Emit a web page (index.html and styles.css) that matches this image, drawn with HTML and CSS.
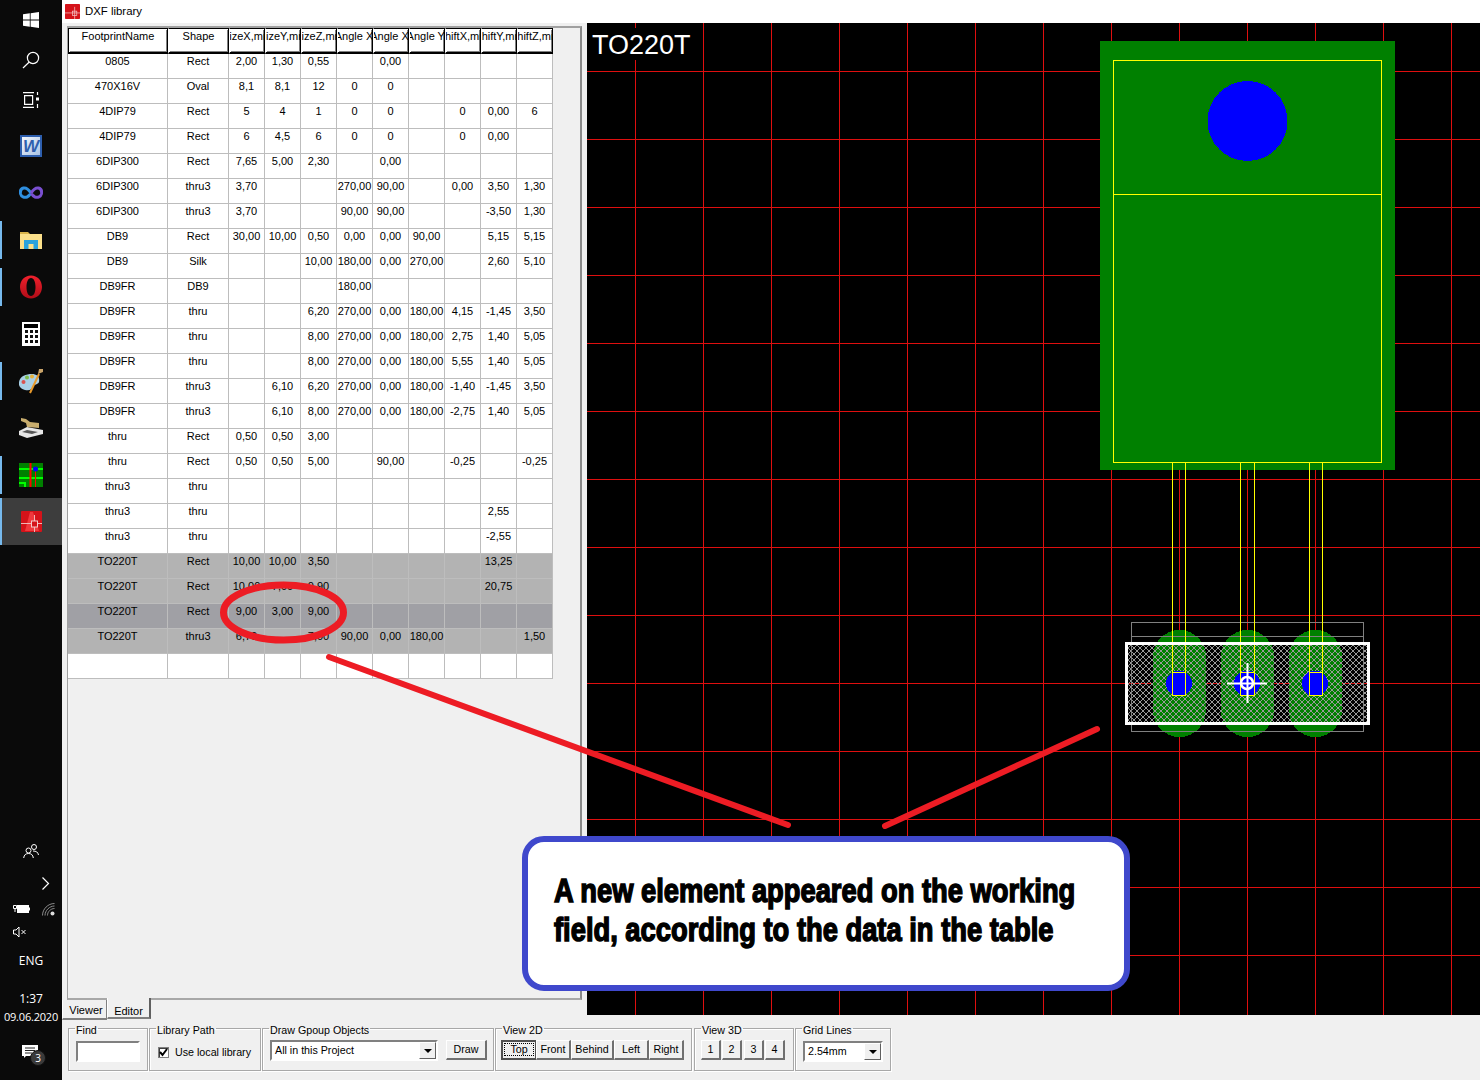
FILE: index.html
```html
<!DOCTYPE html>
<html lang="en">
<head>
<meta charset="utf-8">
<title>DXF library</title>
<link rel="stylesheet" href="styles.css">
</head>
<body>
<div class="desktop">
  <nav class="taskbar">
    <div class="launch">
      <span class="slot short"><svg width="16" height="16" viewBox="0 0 16 16"><path fill="#fff" d="M0 2.3l6.8-1v6.2H0zM7.6 1.2L16 0v7.5H7.6zM0 8.4h6.8v6.3L0 13.7zM7.6 8.4H16V16l-8.4-1.2z"/></svg></span>
      <span class="slot short"><svg width="18" height="18" viewBox="0 0 18 18" fill="none" stroke="#fff" stroke-width="1.2"><circle cx="11" cy="7" r="5.6"/><path d="M7 11.2L1 17"/></svg></span>
      <span class="slot short"><svg width="18" height="16" viewBox="0 0 18 16" fill="none" stroke="#fff" stroke-width="1.2"><path d="M1 .6h11M1 15.4h11M2.6 3.6h8v8.8h-8z"/><path d="M15.5 0v3M15.5 12v4"/><rect x="14" y="5.5" width="3" height="3" fill="#fff" stroke="none"/></svg></span>
      <span class="slot"><svg width="22" height="22" viewBox="0 0 22 22"><defs><linearGradient id="wbg" x1="0" y1="0" x2="1" y2="1"><stop offset="0" stop-color="#f4f8fd"/><stop offset="1" stop-color="#a9c3e6"/></linearGradient></defs><rect width="22" height="22" fill="#2e5fae"/><rect x="2" y="2" width="18" height="18" fill="url(#wbg)"/><text x="11" y="17" class="word-w">W</text></svg></span>
      <span class="slot"><svg width="24" height="14" viewBox="0 0 24 14" fill="none" stroke-width="3"><path stroke="#2f8fe0" d="M12 7C9 2.5 6.5 1.5 4.5 2 1.5 2.8 1 5.2 1.6 8c.7 2.8 3.6 4 6.4 3 1.5-.6 2.8-2 4-4"/><path stroke="#7a4fd0" d="M12 7c3-4.5 5.5-5.5 7.5-5 3 .8 3.5 3.2 2.9 6-.7 2.8-3.6 4-6.4 3-1.5-.6-2.8-2-4-4"/></svg></span>
      <span class="slot"><span class="pin"></span><svg width="22" height="18" viewBox="0 0 22 18"><path fill="#d9b44a" d="M0 1h8l2 2h12v3H0z"/><path fill="#fbe08a" d="M0 3h22v15H0z"/><path fill="#2aa3dd" d="M4 9h14v9h-4.5v-5h-5v5H4z"/></svg></span>
      <span class="slot"><span class="pin"></span><svg width="24" height="24" viewBox="0 0 24 24"><defs><linearGradient id="opr" x1="0" y1="0" x2="0" y2="1"><stop offset="0" stop-color="#f0202c"/><stop offset="1" stop-color="#b00d18"/></linearGradient></defs><path fill="url(#opr)" fill-rule="evenodd" d="M12 .5C18.5.5 23 5.5 23 12s-4.5 11.5-11 11.5S1 18.5 1 12 5.5.5 12 .5zM12 3C9 3 7.5 7 7.5 12s1.500 9 4.500 9 4.500-4 4.500-9S15 3 12 3z"/></svg></span>
      <span class="slot"><svg width="18" height="24" viewBox="0 0 18 24"><rect width="18" height="24" fill="#fff"/><rect x="2" y="2" width="14" height="4" fill="#000"/><path fill="#111" d="M3 8h3v3H3zM8 8h3v3H8zM13 8h3v3h-3zM3 13h3v3H3zM8 13h3v3H8zM13 13h3v3h-3zM3 18h3v3H3zM8 18h3v3H8zM13 18h3v3h-3z"/></svg></span>
      <span class="slot"><span class="pin"></span><svg width="25" height="26" viewBox="0 0 25 26"><path fill="#a9d0e6" d="M0 14C1 8 7 6 13 6c5 0 8 3 7 8-1 3-5 2-6 4-1 4-4 5-8 4-4-1-7-4-6-8z"/><circle cx="4.500" cy="14" r="2" fill="#d9534f"/><circle cx="8" cy="9.500" r="2" fill="#7fbf4d"/><circle cx="13" cy="8.500" r="2" fill="#e8b23a"/><path stroke="#e89a2c" stroke-width="2" d="M11 25L20 6"/><path fill="#caa46a" d="M19 6l1-5 4 0 0 3z"/></svg></span>
      <span class="slot"><svg width="24" height="20" viewBox="0 0 24 20"><path fill="#e6e6e6" d="M0 13l8-4 16 3v4L8 20 0 17z"/><path fill="#555" d="M3 14l5-2 11 2-6 2z"/><path fill="#c8ad6e" d="M2 0l5 1 4 3 9 1v5l-12-1-1-4-5-2z"/></svg></span>
      <span class="slot"><span class="pin"></span><svg width="24" height="24" viewBox="0 0 24 24"><rect width="24" height="24" fill="#008000"/><path fill="#0f0" d="M0 5h24v2H0zM0 14h24v2H0zM0 19h7v5H5v-3H0z"/><path fill="#f00" d="M10.500 0h2v24h-2zM16 6h1v18h-1z"/><circle cx="16.500" cy="6" r="2.500" fill="#00f"/></svg></span>
      <span class="slot active"><span class="pin tall"></span><svg width="21" height="21" viewBox="0 0 21 21"><rect width="21" height="21" rx="1" fill="#d5131a"/><path fill="#f0383d" d="M9 1h3l6 19H4z"/><path stroke="#f2b5b5" fill="none" d="M0 12.500h21M13.500 4v17"/><rect x="10.500" y="10" width="6" height="6" fill="#d5131a" stroke="#f2c9c9"/></svg></span>
    </div>
    <div class="tray">
      <svg class="people" width="16" height="15" viewBox="0 0 16 15" fill="none" stroke="#fff"><circle cx="5.500" cy="6.500" r="2.500"/><path d="M.7 14c.3-3 2-4.500 4.800-4.500S10 11 10.300 14"/><circle cx="11" cy="3" r="2.500"/><path d="M10 7c3 0 5 1 5.500 4"/></svg>
      <svg class="chev" width="9" height="13" viewBox="0 0 9 13" fill="none" stroke="#fff" stroke-width="1.200"><path d="M1.500.5l6 6-6 6"/></svg>
      <div class="tray-row">
        <svg width="17" height="10" viewBox="0 0 17 10"><path fill="none" stroke="#fff" d="M.5 1.500h3v3h-3zM2 4.500V8"/><rect x="4" y="1" width="12" height="8" fill="#fff"/><rect x="16" y="3.500" width="1" height="3" fill="#fff"/></svg>
        <svg width="13" height="13" viewBox="0 0 13 13" fill="none" stroke="#8a8a8a"><path d="M.5 12.500C.5 6 6 .5 12.500.5M3 12.500C3 7.500 7.500 3 12.500 3M5.500 12.500c0-3.800 3.200-7 7-7"/><circle cx="10.500" cy="10.500" r="2" fill="#ddd" stroke="none"/></svg>
      </div>
      <svg class="speaker" width="14" height="12" viewBox="0 0 14 12" fill="none" stroke="#fff"><path d="M.5 4h2.500L6 1v10L3 8H.5z"/><path d="M8.500 4l4 4M12.500 4l-4 4"/></svg>
      <span class="lang">ENG</span>
      <span class="time">1:37</span>
      <span class="date">09.06.2020</span>
      <div class="notify">
        <svg width="16" height="13" viewBox="0 0 16 13"><path fill="#fff" d="M0 0h16v11H4l-2 2v-2H0z"/><path stroke="#222" d="M3 3h10M3 5.500h10M3 8h7"/></svg>
        <span class="badge">3</span>
      </div>
    </div>
  </nav>

  <div class="window">
    <header class="titlebar">
      <svg width="15" height="15" viewBox="0 0 21 21"><rect width="21" height="21" rx="1" fill="#d5131a"/><path stroke="#f4c9c9" fill="none" d="M0 12.500h21M13.500 4v17"/><rect x="10.500" y="10" width="6" height="6" fill="none" stroke="#f4c9c9"/></svg>
      <span>DXF library</span>
    </header>
    <div class="workspace">
      <section class="leftpane">
        <div class="frame">
          <table class="grid">
            <colgroup><col class="c1"><col class="c2"><col class="cn"><col class="cn"><col class="cn"><col class="cn"><col class="cn"><col class="cn"><col class="cn"><col class="cn"><col class="cn"></colgroup>
            <thead>
              <tr><th><span>FootprintName</span></th><th><span>Shape</span></th><th><span>SizeX,mm</span></th><th><span>SizeY,mm</span></th><th><span>SizeZ,mm</span></th><th><span>Angle X'</span></th><th><span>Angle X:</span></th><th><span>Angle Y:</span></th><th><span>ShiftX,mm</span></th><th><span>ShiftY,mm</span></th><th><span>ShiftZ,mm</span></th></tr>
            </thead>
            <tbody>
              <tr><td>0805</td><td>Rect</td><td>2,00</td><td>1,30</td><td>0,55</td><td></td><td>0,00</td><td></td><td></td><td></td><td></td></tr>
              <tr><td>470X16V</td><td>Oval</td><td>8,1</td><td>8,1</td><td>12</td><td>0</td><td>0</td><td></td><td></td><td></td><td></td></tr>
              <tr><td>4DIP79</td><td>Rect</td><td>5</td><td>4</td><td>1</td><td>0</td><td>0</td><td></td><td>0</td><td>0,00</td><td>6</td></tr>
              <tr><td>4DIP79</td><td>Rect</td><td>6</td><td>4,5</td><td>6</td><td>0</td><td>0</td><td></td><td>0</td><td>0,00</td><td></td></tr>
              <tr><td>6DIP300</td><td>Rect</td><td>7,65</td><td>5,00</td><td>2,30</td><td></td><td>0,00</td><td></td><td></td><td></td><td></td></tr>
              <tr><td>6DIP300</td><td>thru3</td><td>3,70</td><td></td><td></td><td>270,00</td><td>90,00</td><td></td><td>0,00</td><td>3,50</td><td>1,30</td></tr>
              <tr><td>6DIP300</td><td>thru3</td><td>3,70</td><td></td><td></td><td>90,00</td><td>90,00</td><td></td><td></td><td>-3,50</td><td>1,30</td></tr>
              <tr><td>DB9</td><td>Rect</td><td>30,00</td><td>10,00</td><td>0,50</td><td>0,00</td><td>0,00</td><td>90,00</td><td></td><td>5,15</td><td>5,15</td></tr>
              <tr><td>DB9</td><td>Silk</td><td></td><td></td><td>10,00</td><td>180,00</td><td>0,00</td><td>270,00</td><td></td><td>2,60</td><td>5,10</td></tr>
              <tr><td>DB9FR</td><td>DB9</td><td></td><td></td><td></td><td>180,00</td><td></td><td></td><td></td><td></td><td></td></tr>
              <tr><td>DB9FR</td><td>thru</td><td></td><td></td><td>6,20</td><td>270,00</td><td>0,00</td><td>180,00</td><td>4,15</td><td>-1,45</td><td>3,50</td></tr>
              <tr><td>DB9FR</td><td>thru</td><td></td><td></td><td>8,00</td><td>270,00</td><td>0,00</td><td>180,00</td><td>2,75</td><td>1,40</td><td>5,05</td></tr>
              <tr><td>DB9FR</td><td>thru</td><td></td><td></td><td>8,00</td><td>270,00</td><td>0,00</td><td>180,00</td><td>5,55</td><td>1,40</td><td>5,05</td></tr>
              <tr><td>DB9FR</td><td>thru3</td><td></td><td>6,10</td><td>6,20</td><td>270,00</td><td>0,00</td><td>180,00</td><td>-1,40</td><td>-1,45</td><td>3,50</td></tr>
              <tr><td>DB9FR</td><td>thru3</td><td></td><td>6,10</td><td>8,00</td><td>270,00</td><td>0,00</td><td>180,00</td><td>-2,75</td><td>1,40</td><td>5,05</td></tr>
              <tr><td>thru</td><td>Rect</td><td>0,50</td><td>0,50</td><td>3,00</td><td></td><td></td><td></td><td></td><td></td><td></td></tr>
              <tr><td>thru</td><td>Rect</td><td>0,50</td><td>0,50</td><td>5,00</td><td></td><td>90,00</td><td></td><td>-0,25</td><td></td><td>-0,25</td></tr>
              <tr><td>thru3</td><td>thru</td><td></td><td></td><td></td><td></td><td></td><td></td><td></td><td></td><td></td></tr>
              <tr><td>thru3</td><td>thru</td><td></td><td></td><td></td><td></td><td></td><td></td><td></td><td>2,55</td><td></td></tr>
              <tr><td>thru3</td><td>thru</td><td></td><td></td><td></td><td></td><td></td><td></td><td></td><td>-2,55</td><td></td></tr>
              <tr class="sel"><td>TO220T</td><td>Rect</td><td>10,00</td><td>10,00</td><td>3,50</td><td></td><td></td><td></td><td></td><td>13,25</td><td></td></tr>
              <tr class="sel"><td>TO220T</td><td>Rect</td><td>10,00</td><td>7,00</td><td>0,90</td><td></td><td></td><td></td><td></td><td>20,75</td><td></td></tr>
              <tr class="cur"><td>TO220T</td><td>Rect</td><td>9,00</td><td>3,00</td><td>9,00</td><td></td><td></td><td></td><td></td><td></td><td></td></tr>
              <tr class="sel"><td>TO220T</td><td>thru3</td><td>6,70</td><td></td><td>7,00</td><td>90,00</td><td>0,00</td><td>180,00</td><td></td><td></td><td>1,50</td></tr>
              <tr><td></td><td></td><td></td><td></td><td></td><td></td><td></td><td></td><td></td><td></td><td></td></tr>
            </tbody>
          </table>
        </div>
        <div class="tabs">
          <span class="tab back">Viewer</span>
          <span class="tab front">Editor</span>
        </div>
      </section>
      <svg class="canvas" width="893" height="992" viewBox="587 23 893 992">
        <rect x="587" y="23" width="893" height="992" fill="#000"/>
        <path class="gridlines" d="M635.500 23V1015M703.500 23V1015M771.500 23V1015M839.500 23V1015M907.500 23V1015M975.500 23V1015M1043.500 23V1015M1111.500 23V1015M1179.500 23V1015M1247.500 23V1015M1315.500 23V1015M1383.500 23V1015M1451.500 23V1015M587 71.500H1480M587 139.500H1480M587 207.500H1480M587 275.500H1480M587 343.500H1480M587 411.500H1480M587 479.500H1480M587 547.500H1480M587 615.500H1480M587 683.500H1480M587 751.500H1480M587 819.500H1480M587 887.500H1480M587 955.500H1480"/>
        <rect x="592" y="28" width="98" height="32" fill="#000"/>
        <text x="592" y="54" class="cv-title">TO220T</text>
        <rect x="1100" y="41" width="295" height="429" fill="#008000"/>
        <circle cx="1247.500" cy="121" r="40" fill="#00f" class="crisp"/>
        <rect x="1113.500" y="60.500" width="268" height="402" class="yl"/>
        <path class="yl" d="M1113.500 194.500H1381.500"/>
        <g class="crisp">
          <rect x="1153" y="630" width="53" height="107" rx="26.500" fill="#008000"/>
          <rect x="1221" y="630" width="53" height="107" rx="26.500" fill="#008000"/>
          <rect x="1289" y="630" width="53" height="107" rx="26.500" fill="#008000"/>
        </g>
        <defs>
          <pattern id="hatch" width="6" height="6" patternUnits="userSpaceOnUse">
            <path d="M-1 1L1 -1M-1 7L7 -1M5 7L7 5M-1 5L1 7M-1 -1L7 7M5 -1L7 1" stroke="#999" stroke-width="1" fill="none"/>
          </pattern>
        </defs>
        <rect x="1128" y="644" width="240" height="79" fill="url(#hatch)"/>
        <g class="crisp">
          <circle cx="1179" cy="683.500" r="13" fill="#00f"/>
          <circle cx="1247" cy="683.500" r="13" fill="#00f"/>
          <circle cx="1315" cy="683.500" r="13" fill="#00f"/>
        </g>
        <path class="gr" d="M1131.500 622.500H1363.500V731.500H1131.500ZM1131.500 636.500H1363.500"/>
        <path class="yl" d="M1172.500 462V695.500H1185.500V462M1172.500 672.500H1185.500M1240.500 462V695.500H1254.500V462M1240.500 672.500H1254.500M1309.500 462V695.500H1322.500V462M1309.500 672.500H1322.500"/>
        <rect x="1126" y="643.500" width="242" height="80" class="wh"/>
        <circle cx="1247" cy="683" r="6" fill="none" stroke="#fff" stroke-width="2.500"/>
        <path d="M1227 683.500H1267M1247.500 663V703" stroke="#fff" stroke-width="2"/>
      </svg>
    </div>
    <footer class="toolbar">
      <fieldset class="group g-find"><legend>Find</legend><span class="field find"></span></fieldset>
      <fieldset class="group g-lib"><legend>Library Path</legend><span class="check"><svg width="9" height="9" viewBox="0 0 9 9" fill="none" stroke="#000" stroke-width="2"><path d="M1 4l2.500 3L8 1"/></svg></span><span class="label">Use local library</span></fieldset>
      <fieldset class="group g-draw"><legend>Draw Gpoup Objects</legend><span class="combo wide"><span class="val">All in this Project</span><span class="arrow"></span></span><button class="btn b-draw">Draw</button></fieldset>
      <fieldset class="group g-2d"><legend>View 2D</legend><button class="btn pressed b-top"><span class="focus">Top</span></button><button class="btn b-front">Front</button><button class="btn b-behind">Behind</button><button class="btn b-left">Left</button><button class="btn b-right">Right</button></fieldset>
      <fieldset class="group g-3d"><legend>View 3D</legend><button class="btn b-n">1</button><button class="btn b-n">2</button><button class="btn b-n">3</button><button class="btn b-n">4</button></fieldset>
      <fieldset class="group g-lines"><legend>Grid Lines</legend><span class="combo narrow"><span class="val">2.54mm</span><span class="arrow"></span></span></fieldset>
    </footer>
  </div>
</div>

<svg class="marks" width="1480" height="1080" viewBox="0 0 1480 1080">
  <ellipse cx="283.500" cy="612.500" rx="60" ry="27.500" fill="none" stroke="#ed1c24" stroke-width="7"/>
  <path d="M329 657L788 825M1097 729L885 826" fill="none" stroke="#ed1c24" stroke-width="6" stroke-linecap="round"/>
</svg>
<aside class="callout">
  <p>A new element appeared on the working</p>
  <p>field, according to the data in the table</p>
</aside>
</body>
</html>
```
FILE: styles.css
```css
* { box-sizing: border-box; }
html, body { margin: 0; padding: 0; }
body { width: 1480px; height: 1080px; overflow: hidden; position: relative; background: #f0f0f0; font-family: "Liberation Sans", Arial, sans-serif; font-size: 11px; color: #000; }
.desktop { display: flex; width: 1480px; height: 1080px; }

/* taskbar */
.taskbar { width: 62px; height: 1080px; flex: none; background: #0a0a0a; display: flex; flex-direction: column; justify-content: space-between; color: #fff; font-family: "Open Sans", sans-serif; }
.launch { display: flex; flex-direction: column; }
.slot { position: relative; height: 47px; display: flex; align-items: center; justify-content: center; }
.slot.short { height: 40px; }
.slot.short:nth-child(3) { height: 39px; margin-bottom: 3px; }
.slot.active { background: #3d3d3d; }
.pin { position: absolute; left: 0; top: 5px; bottom: 4px; width: 2px; background: #76b9ed; }
.pin.tall { top: 0; bottom: 0; }
.word-w { font: italic bold 17px "Liberation Sans", sans-serif; fill: #2e5fae; text-anchor: middle; }
.tray { display: flex; flex-direction: column; align-items: center; height: 243px; position: relative; padding-top: 7px; }
.people { margin-bottom: 18px; }
.chev { margin-left: 28px; margin-bottom: 12px; }
.tray-row { display: flex; gap: 12px; align-items: center; height: 14px; margin-left: 5px; margin-bottom: 10px; }
.speaker { margin-left: -22px; margin-bottom: 15px; }
.lang { font-size: 12px; line-height: 16px; margin-bottom: 21px; }
.time { font-size: 12px; line-height: 18px; }
.date { font-size: 11px; line-height: 17px; letter-spacing: -.2px; margin-bottom: 20px; }
.notify { position: relative; width: 16px; height: 20px; margin-left: -2px; }
.badge { position: absolute; left: 8px; top: 5px; width: 16px; height: 16px; border-radius: 50%; background: #3a3a3a; border: 1px solid #111; font-size: 10px; line-height: 14px; text-align: center; }

/* window */
.window { width: 1418px; display: flex; flex-direction: column; }
.titlebar { height: 23px; background: #fff; display: flex; align-items: center; gap: 5px; padding-left: 3px; padding-bottom: 1px; font-size: 11.400px; }
.workspace { height: 992px; display: flex; }
.leftpane { width: 525px; display: flex; flex-direction: column; background: #f0f0f0; margin-bottom: -5px; position: relative; z-index: 1; height: 997px; }
.frame { height: 974px; flex: none; margin: 3px 5px 0 5px; border-top: 2px solid #a0a0a0; border-left: 1px solid #a0a0a0; border-right: 2px solid #8a8a8a; border-bottom: 2px solid #a8a8a8; }
.grid { border-collapse: separate; border-spacing: 0; table-layout: fixed; width: 485px; background: #fff; }
.c1 { width: 100px; } .c2 { width: 61px; } .cn { width: 36px; }
.grid th { height: 26px; padding: 0; font-weight: normal; background: #fff; border-top: 1px solid #000; border-left: 1px solid transparent; border-right: 1px solid #000; border-bottom: 2px solid #000; box-shadow: inset 1px 1px 0 #fff, inset -1px -1px 0 #808080; vertical-align: top; overflow: hidden; }
.grid th:first-child { border-left-color: #000; }
.grid th span { display: flex; justify-content: center; white-space: nowrap; line-height: 15px; height: 16px; }
.grid td { height: 25px; padding: 0; border-right: 1px solid #bdbdbd; border-bottom: 1px solid #bdbdbd; text-align: center; vertical-align: top; line-height: 15px; white-space: nowrap; overflow: hidden; }
.grid .sel td { background: #b3b3b3; }
.grid .cur td { background: #a0a0a5; }

.tabs { display: flex; height: 22px; align-items: flex-start; flex: none; }
.tab { display: block; text-align: center; }
.tab.back { width: 45px; height: 20px; padding-left: 3px; line-height: 20px; background: #f0f0f0; border-right: 1px solid #808080; border-bottom: 2px solid #808080; border-left: 1px solid #fff; }
.tab.front { width: 44px; height: 21px; line-height: 27px; margin-top: -2px; background: #f0f0f0; border-right: 2px solid #606060; border-bottom: 2px solid #808080; border-left: 1px solid #fff; }

.canvas { display: block; flex: none; }
.crisp { shape-rendering: crispEdges; }
.gridlines { stroke: #df0f0f; stroke-width: 1; fill: none; shape-rendering: crispEdges; }
.yl { fill: none; stroke: #ff0; stroke-width: 1; shape-rendering: crispEdges; }
.gr { fill: none; stroke: #808080; stroke-width: 1; shape-rendering: crispEdges; }
.wh { fill: none; stroke: #fff; stroke-width: 3; shape-rendering: crispEdges; }
.cv-title { font: 27px "Liberation Sans", sans-serif; fill: #fff; }

/* toolbar */
.toolbar { height: 65px; display: flex; gap: 1px; padding: 6px 0 0 6px; background: #f0f0f0; position: relative; align-items: flex-start; font-size: 10.700px; }
.group { margin: 0; padding: 0; height: 50px; border: 1px solid #a8a8a8; box-shadow: 1px 1px 0 #fff, inset 1px 1px 0 #fff; display: block; position: relative; }
.group legend { padding: 0 1px; margin-left: 6px; line-height: 18px; height: 14px; font-size: 10.700px; }
.g-find { width: 80px; } .g-lib { width: 112px; } .g-draw { width: 232px; } .g-2d { width: 197px; } .g-3d { width: 100px; margin-left: 1px; } .g-lines { width: 96px; }
.group > :not(legend) { position: absolute; }
.field, .combo { background: #fff; border: 2px solid; border-color: #808080 #fff #fff #808080; display: block; }
.find { left: 7px; top: 6px; width: 64px; height: 21px; }
.check { left: 8px; top: 12px; width: 11px; height: 11px; background: #fff; border: 1px solid #808080; box-shadow: inset 1px 1px 0 #404040; display: flex; align-items: center; justify-content: center; }
.label { left: 25px; top: 10px; line-height: 14px; white-space: nowrap; }
.combo { top: 5px; height: 21px; }
.wide { left: 7px; width: 168px; }
.narrow { left: 7px; top: 6px; width: 80px; }
.val { position: absolute; left: 3px; top: 1px; line-height: 15px; white-space: nowrap; }
.arrow { position: absolute; right: 0; top: 0; width: 17px; height: 17px; background: #f0f0f0; border: 1px solid; border-color: #fff #606060 #606060 #fff; }
.arrow::after { content: ""; position: absolute; left: 4px; top: 6px; border: 4px solid transparent; border-top: 4px solid #000; border-bottom: 0; }
.btn { font: 10.700px "Liberation Sans", sans-serif; color: #000; padding: 0 0 2px; height: 20px; background: #f0f0f0; border: 1px solid; border-color: #fff #707070 #707070 #fff; border-right-width: 2px; border-bottom-width: 2px; top: 5px; border-radius: 0; }
.b-draw { left: 183px; width: 41px; }
.pressed { border-color: #505050; border-width: 2px 1px 2px 2px; border-style: solid; }
.focus { display: block; outline: 1px dotted #000; margin: 1px 2px; line-height: 11px; }
.b-top { left: 5px; width: 35px; } .b-front { left: 40px; width: 35px; } .b-behind { left: 75px; width: 43px; } .b-left { left: 118px; width: 35px; } .b-right { left: 153px; width: 35px; }
.b-n { width: 20px; }
.g-3d .b-n:nth-of-type(1) { left: 6px; } .g-3d .b-n:nth-of-type(2) { left: 27px; } .g-3d .b-n:nth-of-type(3) { left: 49px; } .g-3d .b-n:nth-of-type(4) { left: 70px; }

/* annotations */
.marks { position: absolute; left: 0; top: 0; z-index: 2; pointer-events: none; }
.callout { position: absolute; left: 522px; top: 836px; width: 608px; height: 155px; z-index: 3; background: #fff; border: 6px solid #3f48cc; border-radius: 22px; padding: 29px 0 0 26px; font-family: "Liberation Sans", sans-serif; font-weight: bold; font-size: 33px; line-height: 39px; white-space: nowrap; -webkit-text-stroke: 1.500px #000; }
.callout p { margin: 0; transform: scaleX(.828); transform-origin: left center; }
```
